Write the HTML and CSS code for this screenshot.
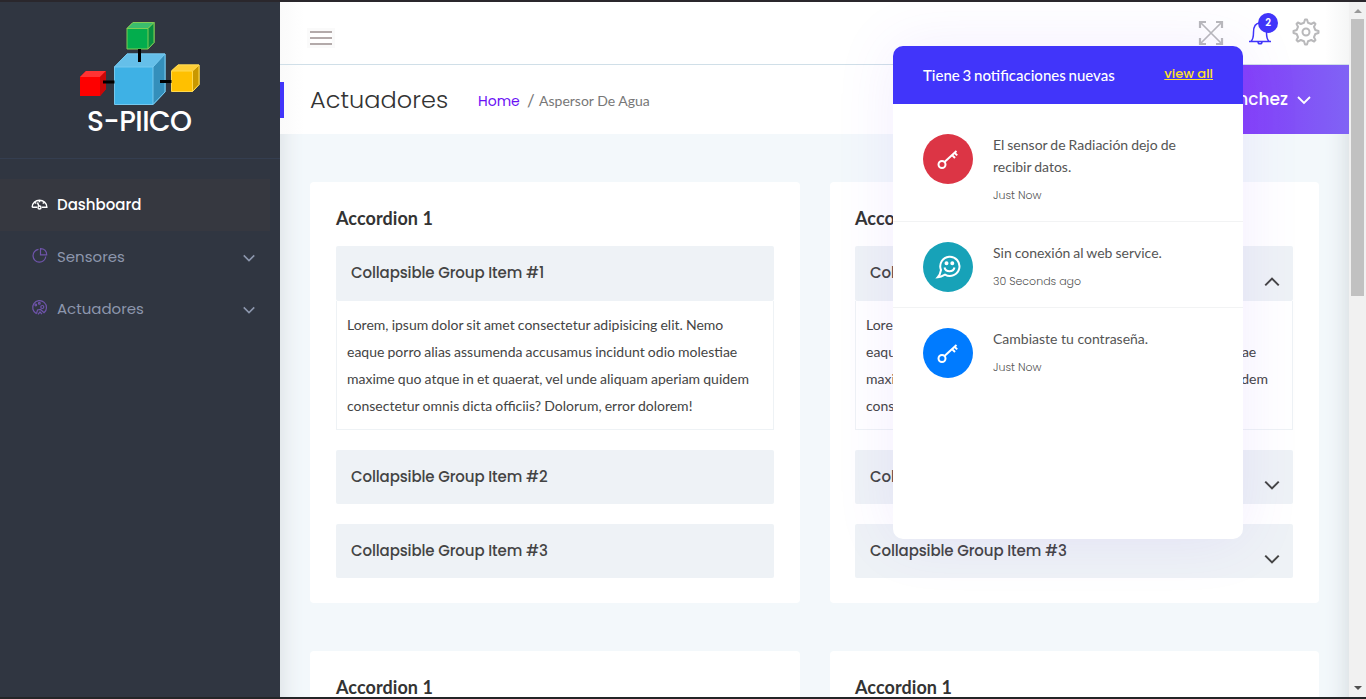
FILE: index.html
```html
<!DOCTYPE html>
<html lang="es">
<head>
<meta charset="utf-8">
<title>S-PIICO</title>
<link rel="stylesheet" href="styles.css">
</head>
<body>
<svg class="defs" width="0" height="0">
  <symbol id="down" viewBox="0 0 16 16"><path d="M2 5l6 6 6-6" fill="none" stroke="currentColor" stroke-width="1.800"/></symbol>
  <symbol id="up" viewBox="0 0 16 16"><path d="M2 11l6-6 6 6" fill="none" stroke="currentColor" stroke-width="1.800"/></symbol>
  <symbol id="key" viewBox="0 0 24 24"><g fill="none" stroke="currentColor" stroke-width="2"><circle cx="6" cy="17.500" r="3.500"/><path d="M8.500 15L20.500 4M16 8l3 3M18.500 5.700l2.700 2.700"/></g></symbol>
</svg>
<div class="shell">
  <aside class="sidebar">
    <div class="logo">
      <svg width="124" height="86" viewBox="0 0 124 86">
        <g stroke-linejoin="round">
          <path d="M35.500 48 48 35h38v38L74 85.500H35.500z" fill="#3eb1e5" stroke="#74c8ee"/>
          <path d="M35.500 48 48 35h38L74 48z" fill="#65bfe9" stroke="#74c8ee"/>
          <path d="M74 48 86 35v38L74 85.500z" fill="#348fbb" stroke="#74c8ee"/>
          <path d="M48 9.500 54 3.500h21v20l-6 6.500H48z" fill="#03ad4d" stroke="#82cb55"/>
          <path d="M48 9.500 54 3.500h21l-6 6z" fill="#3bbd6d" stroke="#82cb55"/>
          <path d="M69 9.500l6-6v20L69 30z" fill="#078f40" stroke="#82cb55"/>
          <path d="M1 58 7 52h20v18l-6 7H1z" fill="#fe0000"/>
          <path d="M1 58 7 52h20l-6 6z" fill="#ff3333"/>
          <path d="M21 58l6-6v18l-6 7z" fill="#c90808"/>
          <path d="M92.500 52 99 46h21v19.500l-6.500 7h-21z" fill="#ffc000" stroke="#ffd94f"/>
          <path d="M92.500 52 99 46h21l-6.500 6z" fill="#ffcf36" stroke="#ffd94f"/>
          <path d="M113.500 52l6.500-6v19.500l-6.500 7z" fill="#c99800" stroke="#ffd94f"/>
        </g>
        <path d="M60.500 30v13M24 63h11.500M81 62.500h11.500" stroke="#000" stroke-width="3"/>
      </svg>
      <div class="brand">S-PIICO</div>
    </div>
    <nav class="nav">
      <a class="nav-item active">
        <svg width="17" height="17" viewBox="0 0 17 17" fill="none" stroke="currentColor" stroke-width="1.500"><path d="M1.200 11.300C1.200 1.900 15.800 1.900 15.800 11.300H11M6 11.300H1.200M8.500 4v2.200M4 6.500l1.300 1M13 6.500l-1.300 1M6.500 6.500l1.500 4"/><circle cx="8.500" cy="11.500" r="1.500"/></svg>
        <span>Dashboard</span>
      </a>
      <a class="nav-item">
        <svg class="violet" width="17" height="17" viewBox="0 0 17 17" fill="none" stroke="currentColor" stroke-width="1.200"><path d="M7.500 2.400A6.400 6.400 0 1 0 14.800 9.500M9.500 1.600v6.200h6.200c0-3.800-2.600-6.200-6.200-6.200z"/></svg>
        <span>Sensores</span>
        <svg class="chev" width="14" height="14"><use href="#down"/></svg>
      </a>
      <a class="nav-item">
        <svg class="violet" width="17" height="17" viewBox="0 0 17 17" fill="none" stroke="currentColor" stroke-width="1.200"><path d="M5.500 14.700A6.900 6.900 0 1 1 13 13.800L9.500 10.500l-3 .5-1 3.700M7 15.300l2-2.300 2 2.200"/><circle cx="8.300" cy="4.300" r=".9"/><circle cx="4.800" cy="6" r=".8"/><circle cx="11.300" cy="8" r="1.500"/></svg>
        <span>Actuadores</span>
        <svg class="chev" width="14" height="14"><use href="#down"/></svg>
      </a>
    </nav>
  </aside>
  <main class="main">
    <header class="topbar">
      <button class="burger"><i></i><i></i><i></i></button>
      <div class="tools">
        <svg class="expand" width="26" height="26" viewBox="0 0 26 26" fill="none" stroke="currentColor" stroke-width="1.700"><path d="M2 2l22 22M24 2L2 24"/><path stroke-width="2.200" d="M2 8V2h6M18 2h6v6M24 18v6h-6M8 24H2v-6"/></svg>
        <div class="bell">
          <svg width="24" height="26" viewBox="0 0 24 26" fill="none" stroke="currentColor" stroke-width="1.500"><path d="M1 22.500h22M3 22.300c2.500-2 2.500-5 2.500-9C5.500 7 8 4 12 4s6.500 3 6.500 9.300c0 4 0 7 2.500 9M10 23c0 2.400 4 2.400 4 0"/></svg>
          <span class="badge">2</span>
        </div>
        <svg class="gear" width="28" height="28" viewBox="-14 -14 28 28" fill="none" stroke="currentColor" stroke-width="2" stroke-linejoin="round"><path d="M-2-9.300-1-12.500H1L2-9.300 5.200-8 8.100-9.500 9.500-8.100 8-5.200 9.300-2 12.500-1V1L9.300 2 8 5.200 9.500 8.100 8.100 9.500 5.200 8 2 9.300 1 12.500H-1L-2 9.300-5.200 8-8.100 9.500-9.500 8.100-8 5.200-9.300 2-12.500 1V-1L-9.300-2-8-5.200-9.500-8.100-8.100-9.500-5.200-8z"/><circle r="3.500"/></svg>
      </div>
    </header>
    <section class="titlebar">
      <h1>Actuadores</h1>
      <div class="crumbs"><a>Home</a><b>/</b><span>Aspersor De Agua</span></div>
      <div class="user"><span>Sánchez</span><svg width="16" height="16"><use href="#down"/></svg></div>
    </section>
    <section class="grid">
      <article class="card">
        <h2>Accordion 1</h2>
        <div class="acc open"><h3>Collapsible Group Item #1</h3></div>
        <p>Lorem, ipsum dolor sit amet consectetur adipisicing elit. Nemo<br>eaque porro alias assumenda accusamus incidunt odio molestiae<br>maxime quo atque in et quaerat, vel unde aliquam aperiam quidem<br>consectetur omnis dicta officiis? Dolorum, error dolorem!</p>
        <div class="acc"><h3>Collapsible Group Item #2</h3></div>
        <div class="acc"><h3>Collapsible Group Item #3</h3></div>
      </article>
      <article class="card">
        <h2>Accordion 1</h2>
        <div class="acc open"><h3>Collapsible Group Item #1</h3><svg width="18" height="18"><use href="#up"/></svg></div>
        <p>Lorem, ipsum dolor sit amet consectetur adipisicing elit. Nemo<br>eaque porro alias assumenda accusamus incidunt odio molestiae<br>maxime quo atque in et quaerat, vel unde aliquam aperiam quidem<br>consectetur omnis dicta officiis? Dolorum, error dolorem!</p>
        <div class="acc"><h3>Collapsible Group Item #2</h3><svg width="18" height="18"><use href="#down"/></svg></div>
        <div class="acc"><h3>Collapsible Group Item #3</h3><svg width="18" height="18"><use href="#down"/></svg></div>
      </article>
      <article class="card"><h2>Accordion 1</h2></article>
      <article class="card"><h2>Accordion 1</h2></article>
    </section>
    <div class="popup">
      <div class="popup-head"><span>Tiene 3 notificaciones nuevas</span><a>view all</a></div>
      <div class="note">
        <div class="dot red"><svg width="24" height="24"><use href="#key"/></svg></div>
        <div><p>El sensor de Radiación dejo de<br>recibir datos.</p><small>Just Now</small></div>
      </div>
      <div class="note">
        <div class="dot teal"><svg width="26" height="26" viewBox="0 0 26 26" fill="none" stroke="currentColor" stroke-width="2"><path d="M6 16A9.600 9.600 0 1 1 10 20.600C7.500 22 5 23 2.800 23.200 4.800 21 5.500 19 6 16z"/><path d="M9.500 13.500c1.200 5 8.800 5 10 0"/><circle cx="11.500" cy="9.300" r="1" fill="currentColor"/><circle cx="17.300" cy="9.300" r="1" fill="currentColor"/></svg></div>
        <div><p>Sin conexión al web service.</p><small>30 Seconds ago</small></div>
      </div>
      <div class="note">
        <div class="dot blue"><svg width="24" height="24"><use href="#key"/></svg></div>
        <div><p>Cambiaste tu contraseña.</p><small>Just Now</small></div>
      </div>
    </div>
  </main>
  <div class="scroll"><i class="arrow-up"></i><div class="thumb"></div><i class="arrow-down"></i></div>
</div>
</body>
</html>
```
FILE: styles.css
```css
* { box-sizing: border-box; }
body { margin: 0; height: 699px; overflow: hidden; font-family: Lato, sans-serif; color: #444; }
h1, h2, h3, p { margin: 0; font-weight: 400; }
.defs { position: absolute; }
.shell { display: flex; height: 699px; border-top: 2px solid #2a272c; border-bottom: 2px solid #232527; overflow: hidden; }

.sidebar { width: 280px; flex: none; background: #303641; font-family: Poppins, Inter, sans-serif; }
.logo { height: 157px; padding: 17px 0 0 79px; border-bottom: 1px solid #343e50; }
.logo svg { display: block; }
.brand { margin: -1px 0 0 8px; font-size: 28px; line-height: 36px; font-weight: 500; color: #fff; letter-spacing: -.55px; white-space: nowrap; }
.nav { padding-top: 20px; }
.nav-item { display: flex; align-items: center; height: 52px; width: 270px; padding: 0 14px 2px 31px; color: #8d97ad; font-size: 15px; }
.nav-item span { margin-left: 9px; flex: 1; }
.active { background: #363840; color: #fff; font-weight: 500; }
.violet { color: #6f54ab; margin-top: -2px; }
.chev { margin-top: 3px; }

.main { position: relative; width: 1069px; flex: none; background: #f3f8fb; box-shadow: inset 24px 0 22px -22px #d9dee2, inset -24px 0 22px -22px #d3dadd; }
.topbar { display: flex; justify-content: space-between; height: 63px; padding: 0 29px 0 30px; border-bottom: 1px solid #d0dfe8; background: linear-gradient(90deg, #fafafa, #fff 24px, #fff calc(100% - 24px), #f5f6f6); }
.burger { display: flex; flex-direction: column; gap: 4px; width: 22px; height: 14px; margin: 29px 0 0; padding: 0; border: 0; background: none; box-shadow: 0 0 0 3px #fafafa; }
.burger i { height: 2px; flex: none; background: #b3aaaa; }
.tools { display: flex; align-items: flex-start; padding-top: 17px; color: #b9b9bb; }
.bell { position: relative; margin: 0 20px 0 24px; color: #4135fa; height: 26px; }
.expand { margin-top: 1px; }
.gear { margin-top: -1px; }
.badge { position: absolute; left: 10px; top: -6px; width: 20px; height: 20px; border-radius: 50%; background: #4135fa; color: #fff; font: 600 10px/20px Poppins, Inter, sans-serif; text-align: center; }
.titlebar { display: flex; align-items: center; height: 69px; padding-left: 26px; background: linear-gradient(90deg, #fafafa, #fff 24px); }
.titlebar::before { content: ""; width: 4px; height: 36px; margin-left: -26px; margin-right: 26px; background: #4135fa; }
h1 { font: 300 24px/36px Poppins, Inter, sans-serif; color: #333; width: 168px; letter-spacing: .05px; }
.crumbs { display: flex; align-items: center; font-size: 14px; color: #777; padding-top: 2px; }
.crumbs a { width: 42px; color: #6a10f5; font-family: Poppins, Inter, sans-serif; font-size: 14px; padding-top: 1px; }
.crumbs b { font-weight: 400; font-size: 17px; width: 19px; padding-left: 7px; }
.user { display: flex; align-items: center; gap: 8px; width: 235px; height: 69px; margin-left: auto; padding-right: 37px; justify-content: flex-end; color: #fff; background: linear-gradient(90deg, #8914fe, #8063f5); font: 500 17px Poppins, Inter, sans-serif; }
.user span { padding-bottom: 2px; }

.grid { display: grid; grid-template-columns: 490px 489px; gap: 48px 30px; padding: 48px 30px 0; grid-template-rows: 421px 421px; }
.card { background: #fff; border-radius: 4px; padding: 25px 26px 0; }
.card:nth-child(even) { padding-left: 25px; }
h2 { font-size: 18px; line-height: 22px; font-weight: 700; color: #333; margin-bottom: 17px; letter-spacing: .08px; }
.acc { display: flex; justify-content: space-between; height: 54px; margin-bottom: 20px; padding: 0 12px 0 15px; background: #eef2f6; border-radius: 2px; }
.acc.open { height: 55px; margin: 0; }
.acc svg { margin-top: 26px; }
.acc.open svg { margin-top: 27px; }
h3 { font: 500 15px/53px Poppins, Inter, sans-serif; color: #444; white-space: nowrap; letter-spacing: -.12px; }
.card p { height: 129px; margin-bottom: 20px; padding: 10px 9px 10px 10px; border: 1px solid #eef2f5; border-top: 0; font-size: 14px; line-height: 27px; color: #444; white-space: nowrap; word-spacing: -.45px; }

.popup { position: absolute; left: 613px; top: 44px; width: 350px; height: 493px; border-radius: 10px; background: #fff; box-shadow: 0 0 60px rgba(130, 80, 250, .1); overflow: hidden; }
.popup-head { display: flex; justify-content: space-between; height: 58px; padding: 0 30px; background: #4135fa; color: #fff; font-size: 15px; font-weight: 500; line-height: 59px; margin-bottom: 10px; word-spacing: -1px; }
.popup-head a { color: #fde028; font: 500 13px/55px Poppins, Inter, sans-serif; text-decoration: underline; word-spacing: 0; }
.note { display: flex; gap: 20px; padding: 20px 30px 15px; border-bottom: 1px solid #f2f3f4; }
.note:last-child { border: 0; }
.note p { font-size: 14px; line-height: 22px; color: #555; word-spacing: -.6px; }
.note:last-child p { word-spacing: 0; }
.note small { display: block; height: 19px; margin-top: 9px; font: 300 11px/17px Poppins, Inter, sans-serif; color: #555; }
.dot { display: flex; align-items: center; justify-content: center; width: 50px; height: 50px; border-radius: 50%; color: #fff; }
.red { background: #dc3545; }
.teal { background: #17a2b8; }
.blue { background: #007bff; }

.scroll { display: flex; flex-direction: column; align-items: center; width: 17px; flex: none; padding: 7px 0; background: #f1f1f1; }
.arrow-up { border: 4px solid transparent; border-top: 0; border-bottom-color: #999; }
.thumb { width: 13px; height: 277px; margin-top: 6px; background: #c1c1c1; }
.arrow-down { margin-top: auto; border: 4px solid transparent; border-bottom: 0; border-top-color: #505050; }
```
